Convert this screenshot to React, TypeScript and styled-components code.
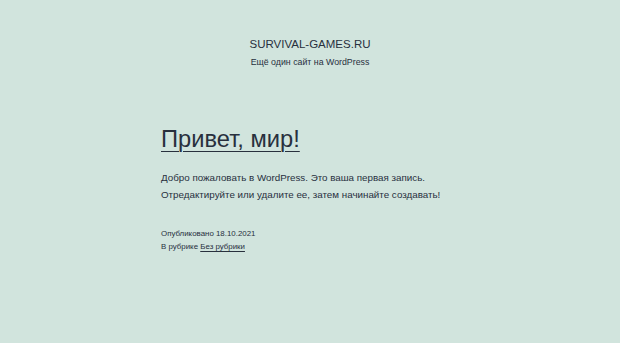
import styled, { createGlobalStyle } from 'styled-components';

const GlobalStyle = createGlobalStyle`
  html, body {
    margin: 0;
    padding: 0;
    background-color: #d1e4dd;
  }
  body {
    font-family: "Liberation Sans", Arial, sans-serif;
    color: #28303d;
  }
`;

const Page = styled.div`
  width: 620px;
  height: 343px;
  overflow: hidden;
  display: flex;
  flex-direction: column;
`;

const Header = styled.header`
  display: flex;
  flex-direction: column;
  align-items: center;
  padding-top: 37px;
`;

const SiteTitle = styled.div`
  font-size: 11.5px;
  line-height: 15px;
  text-transform: uppercase;
`;

const Tagline = styled.div`
  font-size: 8.8px;
  line-height: 12px;
  margin-top: 4px;
`;

const Post = styled.article`
  display: flex;
  flex-direction: column;
  align-items: flex-start;
  padding-left: 161px;
  margin-top: 56px;
`;

const PostTitle = styled.h1`
  margin: 0;
  font-size: 23.7px;
  font-weight: 400;
  line-height: 30px;
  text-decoration: underline;
  text-decoration-thickness: 1px;
  text-underline-offset: 4px;
`;

const Body = styled.div`
  margin-top: 15px;
  font-size: 9.8px;
  line-height: 17px;
`;

const Paragraph = styled.p`
  margin: 0;
`;

const Meta = styled.div`
  margin-top: 25px;
  font-size: 7.9px;
  line-height: 12.5px;
`;

const MetaLink = styled.span`
  text-decoration: underline;
  text-underline-offset: 2px;
`;

export default function App() {
  return (
    <Page>
      <GlobalStyle />
      <Header>
        <SiteTitle>Survival-games.ru</SiteTitle>
        <Tagline>Ещё один сайт на WordPress</Tagline>
      </Header>
      <Post>
        <PostTitle>Привет, мир!</PostTitle>
        <Body>
          <Paragraph>Добро пожаловать в WordPress. Это ваша первая запись.</Paragraph>
          <Paragraph>Отредактируйте или удалите ее, затем начинайте создавать!</Paragraph>
        </Body>
        <Meta>
          <div>Опубликовано 18.10.2021</div>
          <div>
            В рубрике <MetaLink>Без рубрики</MetaLink>
          </div>
        </Meta>
      </Post>
    </Page>
  );
}
